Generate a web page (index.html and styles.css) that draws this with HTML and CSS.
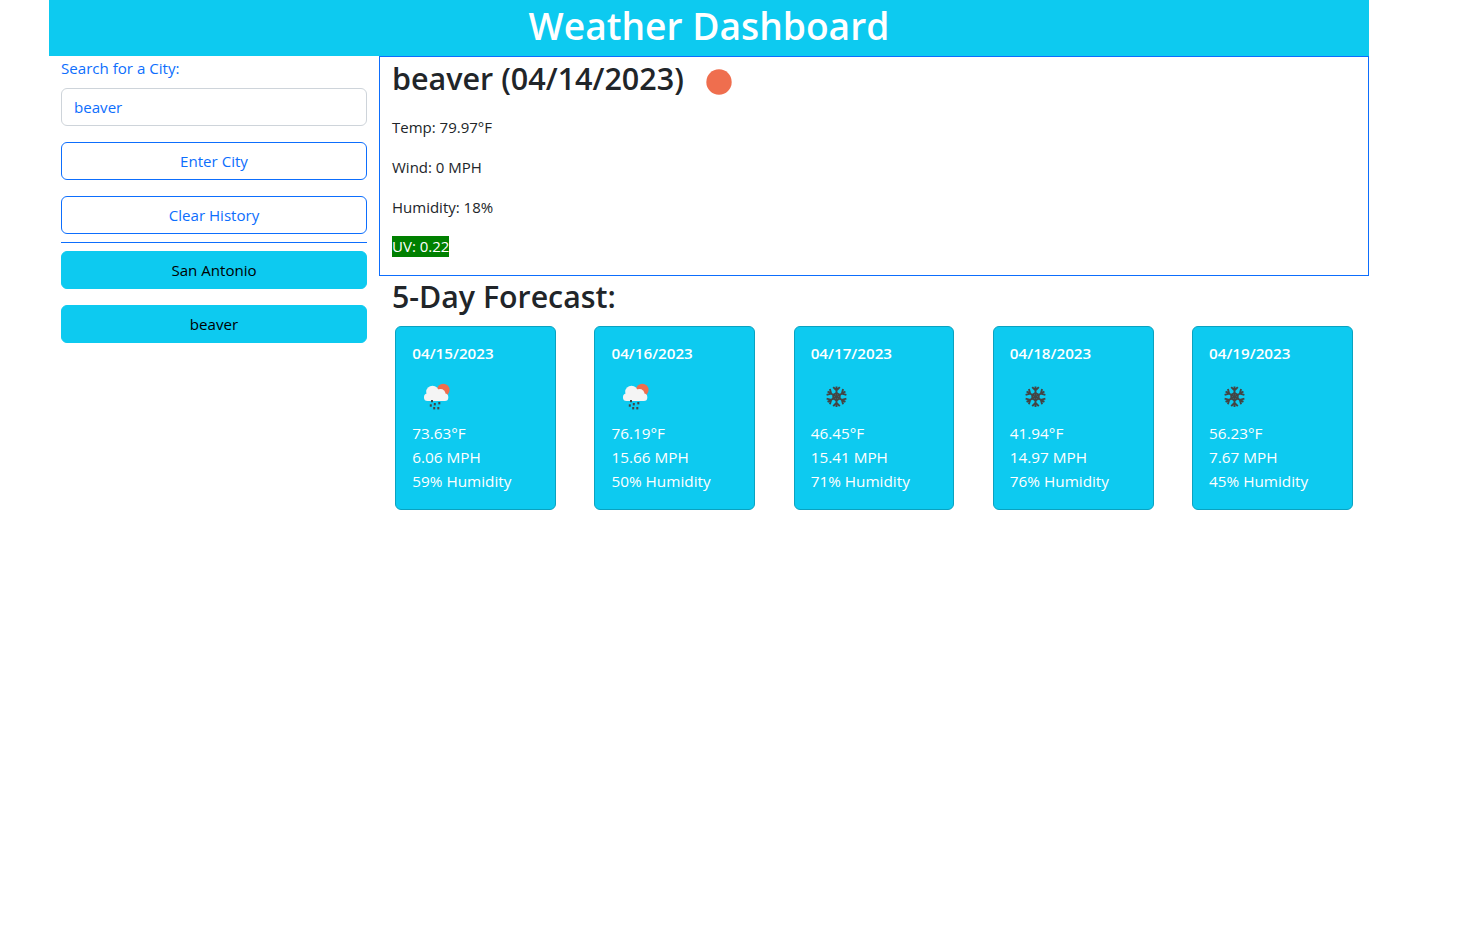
FILE: index.html
```html
<!DOCTYPE html>
<html lang="en">
<head>
  <meta charset="UTF-8" />
  <meta name="viewport" content="width=device-width, initial-scale=1.0"/>
  <title>Weather Dashboard</title>
  <link rel="stylesheet" href="styles.css">
</head>
<body>

  <svg class="icon-defs" width="0" height="0" aria-hidden="true">
    <defs>
      <symbol id="rain-sun" viewBox="0 0 50 50">
        <circle cx="31.300" cy="18" r="6.300" fill="#ef6e4e"/>
        <g fill="#f4f4f4">
          <rect x="12" y="21.500" width="24.300" height="7.500" rx="3.500"/>
          <circle cx="20.500" cy="20" r="6.300"/>
          <circle cx="28.500" cy="22" r="5"/>
        </g>
        <g fill="#444">
          <rect x="19" y="28" width="2" height="2.200"/>
          <rect x="17.800" y="32.300" width="2" height="2.400"/>
          <rect x="21.800" y="31" width="2" height="2.400"/>
          <rect x="21.200" y="35" width="2" height="2.400"/>
          <rect x="26.300" y="30" width="2" height="2.400"/>
          <rect x="25.300" y="35" width="2" height="2.400"/>
        </g>
      </symbol>
      <symbol id="snow" viewBox="0 0 50 50">
        <g stroke="#444" stroke-width="1.900" fill="none">
          <g id="snow-arm">
            <path d="M25.500 24.700V14.400M22.200 15.200l3.300 3.300l3.300-3.300"/>
          </g>
          <use href="#snow-arm" transform="rotate(60 25.500 24.700)"/>
          <use href="#snow-arm" transform="rotate(120 25.500 24.700)"/>
          <use href="#snow-arm" transform="rotate(180 25.500 24.700)"/>
          <use href="#snow-arm" transform="rotate(240 25.500 24.700)"/>
          <use href="#snow-arm" transform="rotate(300 25.500 24.700)"/>
          <path d="M25.500 21l3.200 1.850v3.700l-3.200 1.850l-3.200-1.850v-3.700z"/>
        </g>
      </symbol>
    </defs>
  </svg>

  <div class="page">

    <!-- Header -->
    <header class="banner">
      <h1>Weather Dashboard</h1>
    </header>

    <div class="columns">

      <!-- Search and history -->
      <aside class="sidebar">
        <label class="search-label" for="city">Search for a City:</label>
        <input class="city-input" id="city" type="text" value="beaver" />
        <button class="btn btn-outline">Enter City</button>
        <button class="btn btn-outline">Clear History</button>
        <hr class="divider" />
        <button class="btn btn-city">San Antonio</button>
        <button class="btn btn-city">beaver</button>
      </aside>

      <main class="content">

        <!-- Current weather -->
        <section class="current">
          <h2 class="current-title">beaver (04/14/2023)
            <svg class="current-icon" width="26" height="26" viewBox="0 0 26 26"><circle cx="13" cy="13" r="12.700" fill="#ef6e4e"/></svg>
          </h2>
          <p>Temp: 79.97°F</p>
          <p>Wind: 0 MPH</p>
          <p>Humidity: 18%</p>
          <p><span class="uv">UV: 0.22</span></p>
        </section>

        <!-- Forecast -->
        <h3 class="forecast-title">5-Day Forecast:</h3>
        <div class="forecast">
          <div class="card">
            <h6>04/15/2023</h6>
            <svg class="card-icon"><use href="#rain-sun"/></svg>
            <div>73.63°F</div>
            <div>6.06 MPH</div>
            <div>59% Humidity</div>
          </div>
          <div class="card">
            <h6>04/16/2023</h6>
            <svg class="card-icon"><use href="#rain-sun"/></svg>
            <div>76.19°F</div>
            <div>15.66 MPH</div>
            <div>50% Humidity</div>
          </div>
          <div class="card">
            <h6>04/17/2023</h6>
            <svg class="card-icon"><use href="#snow"/></svg>
            <div>46.45°F</div>
            <div>15.41 MPH</div>
            <div>71% Humidity</div>
          </div>
          <div class="card">
            <h6>04/18/2023</h6>
            <svg class="card-icon"><use href="#snow"/></svg>
            <div>41.94°F</div>
            <div>14.97 MPH</div>
            <div>76% Humidity</div>
          </div>
          <div class="card">
            <h6>04/19/2023</h6>
            <svg class="card-icon"><use href="#snow"/></svg>
            <div>56.23°F</div>
            <div>7.67 MPH</div>
            <div>45% Humidity</div>
          </div>
        </div>

      </main>
    </div>
  </div>

</body>
</html>
```

FILE: styles.css
```css
body {
  margin: 0;
  padding: 0;
  font-family: "Open Sans", "Noto Sans", sans-serif;
  font-size: 15px;
  line-height: 24px;
  color: #212529;
  background-color: #fff;
}

.icon-defs {
  position: absolute;
}

.page {
  width: 1320px;
  margin-left: 49px;
}

.banner {
  height: 56px;
  background-color: #0dcaf0;
  text-align: center;
}

.banner h1 {
  margin: 0;
  font-size: 37.200px;
  font-weight: 600;
  line-height: 52px;
  color: #fff;
}

.columns {
  display: flex;
}

.sidebar {
  display: flex;
  flex-direction: column;
  width: 306px;
  padding: 0 12px;
  flex-shrink: 0;
  font-size: 15.100px;
}

.search-label {
  height: 32px;
  color: #0d6efd;
}

.city-input {
  box-sizing: border-box;
  height: 38px;
  margin-bottom: 16px;
  padding: 6px 12px;
  border: 1px solid #ced4da;
  border-radius: 6px;
  font: inherit;
  color: #0d6efd;
}

.btn {
  box-sizing: border-box;
  height: 38px;
  margin-bottom: 16px;
  padding: 6px 12px;
  border-radius: 6px;
  font: inherit;
  text-align: center;
  cursor: pointer;
}

.btn-outline {
  background-color: #fff;
  border: 1px solid #0d6efd;
  color: #0d6efd;
}

.btn-city {
  background-color: #0dcaf0;
  border: 1px solid #0dcaf0;
  color: #000;
}

.divider {
  width: 100%;
  height: 1px;
  margin: -8px 0 8px;
  border: none;
  background-color: #0d6efd;
}

.content {
  flex: 1;
  min-width: 0;
}

.current {
  box-sizing: border-box;
  height: 220px;
  padding: 0 12px;
  border: 1px solid #0d6efd;
}

.current-title {
  margin: 0 0 16px;
  font-size: 30.500px;
  font-weight: 600;
  line-height: 42px;
}

.current-icon {
  margin-left: 14px;
  vertical-align: -5px;
}

.current p {
  margin: 0 0 16px;
}

.uv {
  display: inline-block;
  line-height: 21px;
  vertical-align: top;
  margin-top: 1px;
  background-color: #008000;
  color: #fff;
}

.forecast-title {
  margin: 0;
  padding: 0 13px;
  height: 50px;
  font-size: 30.300px;
  font-weight: 600;
  line-height: 42px;
}

.forecast {
  display: flex;
  gap: 38.400px;
  padding-left: 16.300px;
}

.card {
  box-sizing: border-box;
  width: 160.800px;
  height: 184px;
  padding: 16px;
  background-color: #0dcaf0;
  border: 1px solid #0aa2c0;
  border-radius: 6px;
  font-size: 15.300px;
  color: #fff;
}

.card h6 {
  margin: 0 0 9px;
  font-size: 15.200px;
  font-weight: 600;
  line-height: 20px;
}

.card-icon {
  display: block;
  width: 50px;
  height: 50px;
  margin-bottom: -1px;
}
```
